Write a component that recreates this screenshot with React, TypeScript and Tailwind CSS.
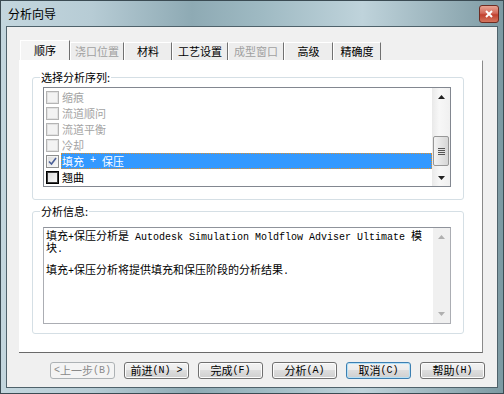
import React from 'react'

const CJK = "font-['Noto_Sans_CJK_SC','Microsoft_YaHei',sans-serif]"

// splits a string into ascii / cjk runs so latin can get its own font
function Mixed({ text, latin }: { text: string; latin: string }) {
  const parts = text.split(/([\x00-\x7f]+)/)
  return (
    <>
      {parts.map((p, i) =>
        !p ? null : /^[\x00-\x7f]+$/.test(p) ? (
          <span key={i} className={latin}>
            {p.replace(/ /g, '\u00a0')}
          </span>
        ) : (
          <span key={i}>{p}</span>
        )
      )}
    </>
  )
}

const TABS = [
  { label: '顺序', w: 'w-[50px]', active: true },
  { label: '浇口位置', w: 'w-[54px]', disabled: true },
  { label: '材料', w: 'w-[48px]' },
  { label: '工艺设置', w: 'w-[56px]' },
  { label: '成型窗口', w: 'w-[56px]', disabled: true },
  { label: '高级', w: 'w-[49px]' },
  { label: '精确度', w: 'w-[48px]' },
]

const ITEMS = [
  { label: '缩痕', disabled: true },
  { label: '流道顺问', disabled: true },
  { label: '流道平衡', disabled: true },
  { label: '冷却', disabled: true },
  { label: '填充 + 保压', checked: true, selected: true },
  { label: '翘曲', focus: true },
]

const MONO = "font-['Liberation_Mono',monospace] text-[10px]"

function CheckBox({ disabled, checked, focus }: { disabled?: boolean; checked?: boolean; focus?: boolean }) {
  if (disabled) {
    return <span className="w-[13px] h-[13px] shrink-0 border border-[#b4b4b4] bg-[#f3f3f3] shadow-[inset_0_0_0_1px_#e2e2e2]" />
  }
  if (focus) {
    return <span className="w-[13px] h-[13px] shrink-0 border border-black bg-[linear-gradient(135deg,#d9d9d9,#fafafa)] shadow-[inset_0_0_0_1px_#3a3a3a]" />
  }
  return (
    <span className="w-[13px] h-[13px] shrink-0 border border-[#8e8f8f] bg-[linear-gradient(135deg,#dcdcdc,#fbfbfb)] shadow-[inset_0_0_0_1px_#f4f4f4] flex items-center justify-center">
      {checked && (
        <svg width="9" height="9" viewBox="0 0 9 9">
          <path d="M1 4.5 L3.5 7 L8 1" fill="none" stroke="#4a5f97" strokeWidth="1.6" />
        </svg>
      )}
    </span>
  )
}

function Arrow({ up, color }: { up?: boolean; color: string }) {
  return (
    <svg width="7" height="4" viewBox="0 0 7 4">
      <path d={up ? 'M0 4 L3.5 0 L7 4 Z' : 'M0 0 L7 0 L3.5 4 Z'} fill={color} />
    </svg>
  )
}

function Button({ text, kind }: { text: string; kind?: 'disabled' | 'default' }) {
  const base = 'w-[65px] h-[17px] rounded-[3px] border flex items-center justify-center text-[11px] leading-none'
  const look =
    kind === 'disabled'
      ? 'border-[#adb2b5] bg-[#f4f4f4] text-[#8a8a8a]'
      : kind === 'default'
        ? 'border-[#3c7fb1] bg-[linear-gradient(#f2f2f2,#ebebeb_50%,#dddddd_50%,#cfcfcf)] shadow-[inset_0_0_0_1px_#b6e1f7] text-black'
        : 'border-[#707070] bg-[linear-gradient(#f2f2f2,#ebebeb_50%,#dddddd_50%,#cfcfcf)] shadow-[inset_0_0_0_1px_#fcfcfc] text-black'
  return (
    <div className={`${base} ${look}`}>
      <Mixed text={text} latin={MONO} />
    </div>
  )
}

function GroupBox({ title, children }: { title: string; children: React.ReactNode }) {
  return (
    <div className="relative ml-[13px] w-[432px] h-[123px] border border-[#d5dfe5] rounded-[3px]">
      <span className="absolute -top-[7px] left-[7px] bg-white px-[1px] text-[11px] leading-[12px] text-black">{title}</span>
      {children}
    </div>
  )
}

export default function App() {
  return (
    <div
      className={`w-[504px] h-[394px] flex flex-col border border-[#3b4b53] bg-[linear-gradient(90deg,#c3d6de_0%,#b7ccd5_18%,#8eaab4_38%,#9fbac3_52%,#bfd3db_72%,#7d9aa3_100%)] ${CJK}`}
    >
      {/* title bar */}
      <div className="h-[25px] flex items-center justify-between pl-[7px] pr-[4px]">
        <span className="text-[12px] leading-none text-black">分析向导</span>
        <div className="w-[20px] h-[18px] rounded-[3px] border border-[#6e2c22] bg-[linear-gradient(#e8a493,#d2695a_45%,#c1402e_55%,#d3755e)] flex items-center justify-center">
          <svg width="8" height="8" viewBox="0 0 8 8">
            <path d="M1 1 L7 7 M7 1 L1 7" stroke="white" strokeWidth="2" />
          </svg>
        </div>
      </div>

      {/* client area */}
      <div className="flex-1 mx-[5px] mb-[5px] border border-[#4f626b] bg-[#f0f0f0] flex flex-col">
        {/* tabs */}
        <div className="flex items-end pl-[13px] pt-[13px] h-[33px]">
          {TABS.map((t) => (
            <div
              key={t.label}
              className={`${t.w} ${t.active ? 'h-[20px] bg-[#f4f4f4]' : 'h-[18px] bg-[#ededed]'} border-t border-l border-white border-r border-r-[#707070] flex items-center justify-center text-[11px] leading-none ${t.disabled ? 'text-[#a0a0a0]' : 'text-black'}`}
            >
              {t.label}
            </div>
          ))}
        </div>

        {/* tab page */}
        <div className="ml-[12px] w-[464px] h-[293px] bg-white border-t border-t-white border-r border-r-[#8a8a8a] border-b border-b-[#6a6a6a] flex flex-col pt-[16px]">
          <GroupBox title="选择分析序列:">
            <div className="ml-[10px] mt-[9px] w-[408px] h-[100px] border border-[#828790] bg-white flex">
              <div className="flex-1 pt-[1px] pl-[2px] flex flex-col">
                {ITEMS.map((it) => (
                  <div key={it.label} className="h-[16px] flex items-center">
                    <CheckBox disabled={it.disabled} checked={it.checked} focus={it.focus} />
                    <div
                      className={`ml-[2px] flex-1 h-full flex items-center pl-[1px] text-[11px] leading-none ${
                        it.selected
                          ? 'bg-[#3399ff] text-white outline-1 outline-dotted outline-[#e0902c] -outline-offset-1'
                          : it.disabled
                            ? 'text-[#a3a3a3]'
                            : 'text-black'
                      }`}
                    >
                      <Mixed text={it.label} latin={MONO} />
                    </div>
                  </div>
                ))}
              </div>
              {/* scrollbar */}
              <div className="w-[18px] h-full flex flex-col bg-[linear-gradient(90deg,#e9e9e9,#f7f7f7_40%,#f0f0f0)]">
                <div className="h-[17px] flex items-center justify-center">
                  <Arrow up color="#202020" />
                </div>
                <div className="h-[31px]" />
                <div className="mx-[1px] h-[30px] rounded-[2px] border border-[#979797] bg-[linear-gradient(90deg,#f3f3f3,#e4e4e4_50%,#d6d6d6)] flex flex-col items-center justify-center gap-[1px]">
                  <span className="w-[7px] h-[1px] bg-[#555]" />
                  <span className="w-[7px] h-[1px] bg-[#555]" />
                  <span className="w-[7px] h-[1px] bg-[#555]" />
                  <span className="w-[7px] h-[1px] bg-[#555]" />
                </div>
                <div className="flex-1" />
                <div className="h-[17px] flex items-center justify-center">
                  <Arrow color="#202020" />
                </div>
              </div>
            </div>
          </GroupBox>

          <div className="h-[11px]" />

          <GroupBox title="分析信息:">
            <div className="ml-[10px] mt-[15px] w-[408px] h-[97px] border border-[#abadb3] border-t-[#8f939b] bg-white flex">
              <div className="flex-1 pl-[2px] pt-[1px] text-[11px] leading-[12px] text-black whitespace-nowrap">
                <div className="h-[12px]">
                  <Mixed text="填充+保压分析是 Autodesk Simulation Moldflow Adviser Ultimate 模" latin={MONO} />
                </div>
                <div className="h-[12px]">
                  <Mixed text="块." latin={MONO} />
                </div>
                <div className="h-[10px]" />
                <div className="h-[12px]">
                  <Mixed text="填充+保压分析将提供填充和保压阶段的分析结果." latin={MONO} />
                </div>
              </div>
              <div className="w-[17px] h-full flex flex-col justify-between bg-[#f0f0f0] py-[4px]">
                <div className="h-[10px] flex items-center justify-center">
                  <Arrow up color="#b0b0b0" />
                </div>
                <div className="h-[10px] flex items-center justify-center">
                  <Arrow color="#b0b0b0" />
                </div>
              </div>
            </div>
          </GroupBox>
        </div>

        {/* buttons */}
        <div className="mt-[9px] pl-[43px] flex gap-[9px]">
          <Button text="<上一步(B)" kind="disabled" />
          <Button text="前进(N) >" />
          <Button text="完成(F)" />
          <Button text="分析(A)" />
          <Button text="取消(C)" kind="default" />
          <Button text="帮助(H)" />
        </div>
      </div>
    </div>
  )
}
